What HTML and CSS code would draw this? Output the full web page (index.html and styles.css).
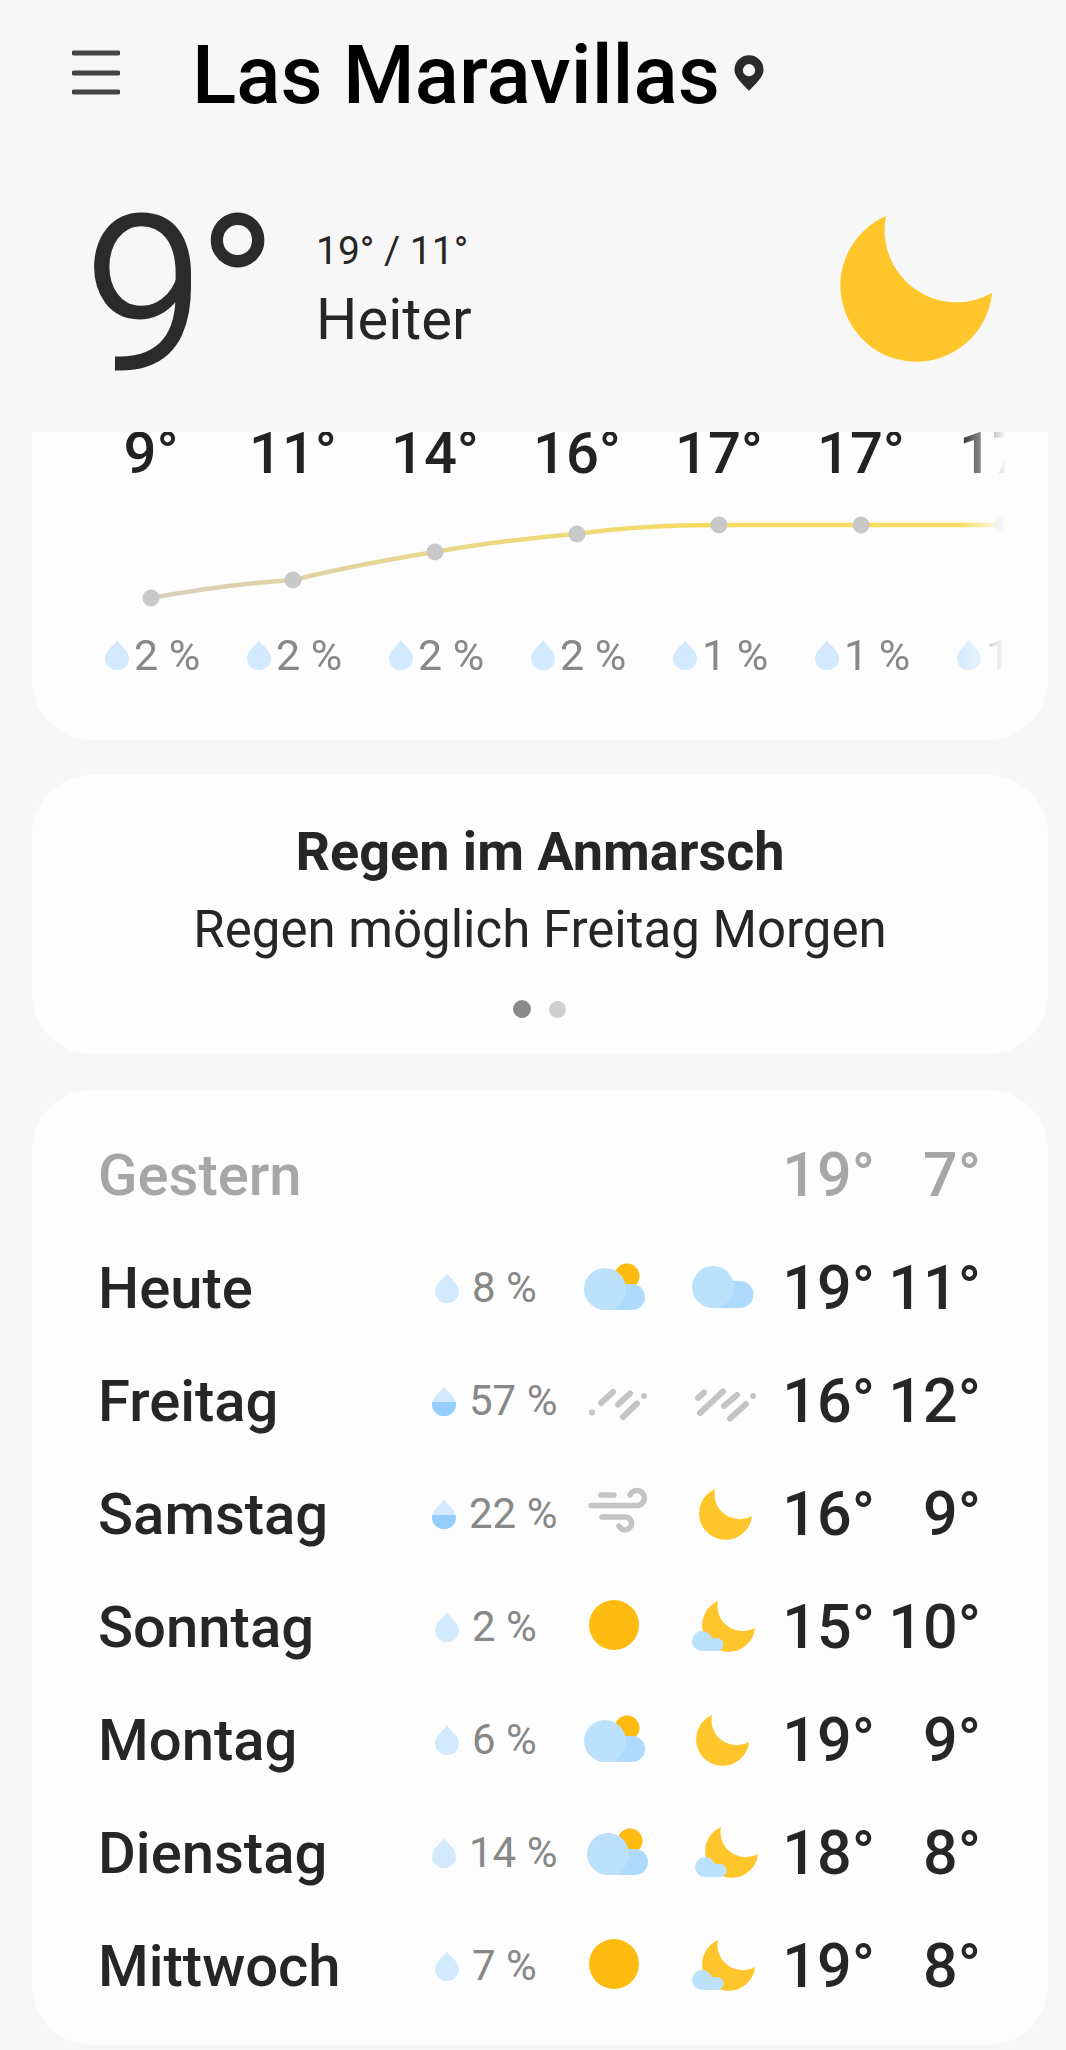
FILE: index.html
```html
<!DOCTYPE html>
<html lang="de">
<head>
<meta charset="utf-8">
<title>Wetter</title>
<link rel="stylesheet" href="styles.css">
</head>
<body>
<svg class="defs" aria-hidden="true">
  <defs>
    <clipPath id="dropfill"><rect x="0" y="16" width="24" height="16"/></clipPath>
    <symbol id="moon" viewBox="0 0 152 146" overflow="visible"><path fill="#ffc62b" d="M46 0A76 76 0 1 0 152 77A72 72 0 0 1 46 0Z"/></symbol>
    <symbol id="drop" viewBox="0 0 24 30"><path fill="#d3eafe" d="M12 0C14 5 24 10 24 18.500A12 11.500 0 0 1 0 18.500C0 10 10 5 12 0Z"/></symbol>
    <symbol id="dropfull" viewBox="0 0 24 30"><path fill="#d3eafe" d="M12 0C14 5 24 10 24 18.500A12 11.500 0 0 1 0 18.500C0 10 10 5 12 0Z"/><path clip-path="url(#dropfill)" fill="#95cdff" d="M12 0C14 5 24 10 24 18.500A12 11.500 0 0 1 0 18.500C0 10 10 5 12 0Z"/></symbol>
    <symbol id="cloudsun" viewBox="0 0 64 50" overflow="visible">
      <circle cx="45" cy="13" r="12.500" fill="#ffbb0f"/>
      <path fill="#aedbfd" d="M23 21H50A13 13 0 0 1 50 47H23Z"/>
      <circle cx="23" cy="26" r="21" fill="#bbe1fd"/>
      <path fill="#bbe1fd" d="M23 47H34V40H23Z"/>
    </symbol>
    <symbol id="cloud" viewBox="0 0 64 50" overflow="visible">
      <path fill="#aedbfd" d="M22 18H49A13.500 13.500 0 0 1 49 45H22Z"/>
      <circle cx="22" cy="24" r="21" fill="#bbe1fd"/>
    </symbol>
    <symbol id="sun" viewBox="0 0 64 50" overflow="visible"><circle cx="32" cy="23" r="25" fill="#ffbb0f"/></symbol>
    <symbol id="moonsmall" viewBox="0 0 64 50" overflow="visible"><use href="#moon" x="8" y="0" width="53" height="51"/></symbol>
    <symbol id="moonleft" viewBox="0 0 64 50" overflow="visible"><use href="#moon" x="5" y="0" width="53" height="51"/></symbol>
    <symbol id="mooncloud" viewBox="0 0 64 50" overflow="visible">
      <use href="#moon" x="11" y="-1" width="53" height="51"/>
      <path fill="#bbe1fd" d="M11 29A10 10 0 0 1 21 37A7 7 0 0 1 24 49H11A10 10 0 0 1 11 29Z"/>
      <path fill="#bbe1fd" d="M14 36H26A6.500 6.500 0 0 1 26 49H14Z"/>
    </symbol>
    <symbol id="raina" viewBox="0 0 64 50" overflow="visible">
      <g fill="none" stroke="#c4c4c4" stroke-width="6" stroke-linecap="round">
        <path d="M10 36.500V36.500M19 27L31 16M36 28.500L48 17.500M41 41L55 27.500M62 20V20"/>
      </g>
    </symbol>
    <symbol id="rainb" viewBox="0 0 64 50" overflow="visible">
      <g fill="none" stroke="#c4c4c4" stroke-width="6" stroke-linecap="round">
        <path d="M7 22L13 16.500M9 37L32 15.500M33 30L46 19M39 42.500L55 28M62 20V20"/>
      </g>
    </symbol>
    <symbol id="wind" viewBox="0 0 64 50" overflow="visible">
      <g fill="none" stroke="#c4c4c4" stroke-width="5.500" stroke-linecap="round">
        <path d="M19 6H32M9 16.500H56A7.500 7.500 0 1 0 48 6M20 28H44A6.500 6.500 0 1 1 37 37"/>
      </g>
    </symbol>
  </defs>
</svg>

<header class="topbar">
  <svg class="menu" viewBox="0 0 48 46"><path d="M2 3H46M2 23H46M2 42H46" fill="none" stroke="#444" stroke-width="5" stroke-linecap="round"/></svg>
  <h1 class="place">Las Maravillas</h1>
  <svg class="pin" viewBox="0 0 32 38"><path fill-rule="evenodd" fill="#2b2b2b" d="M16 0A15.500 15.500 0 0 1 31.500 15.500C31.500 24 22 31 16 38C10 31 .5 24 .5 15.500A15.500 15.500 0 0 1 16 0ZM16 9.500A6.500 6.500 0 1 0 16 22.500A6.500 6.500 0 1 0 16 9.500Z"/></svg>
</header>

<section class="hero">
  <div class="now">9°</div>
  <div class="now-detail">
    <div class="range">19° / 11°</div>
    <div class="cond">Heiter</div>
  </div>
  <svg class="hero-moon"><use href="#moon" width="152" height="146"/></svg>
</section>

<section class="card hourly">
  <div class="scroller">
    <div class="hour-temps">
      <span>9°</span><span>11°</span><span>14°</span><span>16°</span><span>17°</span><span>17°</span><span>17°</span>
    </div>
    <svg class="curve" viewBox="0 0 924 105" width="924" height="105">
      <defs>
        <linearGradient id="linegrad" gradientUnits="userSpaceOnUse" x1="71" x2="640" y1="0" y2="0">
          <stop offset="0" stop-color="#d8d0bd"/>
          <stop offset="1" stop-color="#f8dc5e"/>
        </linearGradient>
      </defs>
      <path fill="none" stroke="url(#linegrad)" stroke-width="4.500" d="M71 88C120 79 165 73 213 70C262 58 305 50 355 42C405 33 450 28 497 24C545 17 590 15 639 15H924"/>
      <g fill="#c8c8c8">
        <circle cx="71" cy="88" r="8.500"/><circle cx="213" cy="70" r="8.500"/><circle cx="355" cy="42" r="8.500"/><circle cx="497" cy="24" r="8.500"/><circle cx="639" cy="15" r="8.500"/><circle cx="781" cy="15" r="8.500"/><circle cx="923" cy="15" r="8.500"/>
      </g>
    </svg>
    <div class="hour-rain">
      <span class="hr"><svg class="hr-drop"><use href="#drop" width="24" height="30"/></svg>2 %</span>
      <span class="hr"><svg class="hr-drop"><use href="#drop" width="24" height="30"/></svg>2 %</span>
      <span class="hr"><svg class="hr-drop"><use href="#drop" width="24" height="30"/></svg>2 %</span>
      <span class="hr"><svg class="hr-drop"><use href="#drop" width="24" height="30"/></svg>2 %</span>
      <span class="hr"><svg class="hr-drop"><use href="#drop" width="24" height="30"/></svg>1 %</span>
      <span class="hr"><svg class="hr-drop"><use href="#drop" width="24" height="30"/></svg>1 %</span>
      <span class="hr"><svg class="hr-drop"><use href="#drop" width="24" height="30"/></svg>1 %</span>
    </div>
  </div>
</section>

<section class="card notice">
  <h2 class="notice-title">Regen im Anmarsch</h2>
  <p class="notice-text">Regen möglich Freitag Morgen</p>
  <div class="dots"><span class="dot active"></span><span class="dot"></span></div>
</section>

<section class="card days">
  <div class="row past">
    <div class="day">Gestern</div>
    <div class="hi past-hi">19°</div><div class="lo">7°</div>
  </div>
  <div class="row">
    <div class="day">Heute</div>
    <div class="pct"><svg class="drop"><use href="#drop" width="24" height="30"/></svg>8 %</div>
    <svg class="ic"><use href="#cloudsun" width="64" height="50"/></svg>
    <svg class="ic ic2"><use href="#cloud" width="64" height="50"/></svg>
    <div class="hi">19°</div><div class="lo">11°</div>
  </div>
  <div class="row">
    <div class="day">Freitag</div>
    <div class="pct wide"><svg class="drop"><use href="#dropfull" width="24" height="30"/></svg>57 %</div>
    <svg class="ic"><use href="#raina" width="64" height="50"/></svg>
    <svg class="ic ic2"><use href="#rainb" width="64" height="50"/></svg>
    <div class="hi">16°</div><div class="lo">12°</div>
  </div>
  <div class="row">
    <div class="day">Samstag</div>
    <div class="pct wide"><svg class="drop"><use href="#dropfull" width="24" height="30"/></svg>22 %</div>
    <svg class="ic"><use href="#wind" width="64" height="50"/></svg>
    <svg class="ic ic2"><use href="#moonsmall" width="64" height="50"/></svg>
    <div class="hi">16°</div><div class="lo">9°</div>
  </div>
  <div class="row">
    <div class="day">Sonntag</div>
    <div class="pct"><svg class="drop"><use href="#drop" width="24" height="30"/></svg>2 %</div>
    <svg class="ic"><use href="#sun" width="64" height="50"/></svg>
    <svg class="ic ic2"><use href="#mooncloud" width="64" height="50"/></svg>
    <div class="hi">15°</div><div class="lo">10°</div>
  </div>
  <div class="row">
    <div class="day">Montag</div>
    <div class="pct"><svg class="drop"><use href="#drop" width="24" height="30"/></svg>6 %</div>
    <svg class="ic"><use href="#cloudsun" width="64" height="50"/></svg>
    <svg class="ic ic2"><use href="#moonleft" width="64" height="50"/></svg>
    <div class="hi">19°</div><div class="lo">9°</div>
  </div>
  <div class="row">
    <div class="day">Dienstag</div>
    <div class="pct wide"><svg class="drop"><use href="#drop" width="24" height="30"/></svg>14 %</div>
    <svg class="ic nudge"><use href="#cloudsun" width="64" height="50"/></svg>
    <svg class="ic ic2 nudge"><use href="#mooncloud" width="64" height="50"/></svg>
    <div class="hi">18°</div><div class="lo">8°</div>
  </div>
  <div class="row">
    <div class="day">Mittwoch</div>
    <div class="pct"><svg class="drop"><use href="#drop" width="24" height="30"/></svg>7 %</div>
    <svg class="ic"><use href="#sun" width="64" height="50"/></svg>
    <svg class="ic ic2"><use href="#mooncloud" width="64" height="50"/></svg>
    <div class="hi">19°</div><div class="lo">8°</div>
  </div>
</section>
</body>
</html>
```

FILE: styles.css
```css
html, body {
  margin: 0;
  padding: 0;
  background: #f7f7f7;
  height: 2050px;
  overflow: hidden;
  font-family: Roboto, "Liberation Sans", sans-serif;
  color: #262626;
}

.defs { width: 0; height: 0; display: block; }

.topbar {
  display: flex;
  align-items: center;
  height: 148px;
  padding-left: 72px;
}
.menu { width: 48px; height: 46px; margin-top: -3px; }
.place {
  margin: 2px 0 0 72px;
  font-size: 82px;
  font-weight: 500;
  color: #000;
  line-height: 1;
}
.pin { width: 30px; height: 38px; margin: -2px 0 0 14px; }

.hero {
  display: flex;
  height: 284px;
  padding: 0 74px 0 85px;
}
.now {
  font-size: 213px;
  font-weight: 300;
  -webkit-text-stroke: 3px #2b2b2b;
  line-height: 1;
  letter-spacing: -6px;
  width: 231px;
  margin-top: 41px;
  color: #2b2b2b;
}
.now-detail { flex: 1; padding-top: 80px; }
.range { font-size: 39px; line-height: 46px; }
.cond { font-size: 58px; line-height: 68px; margin-top: 11px; }
.hero-moon { width: 152px; height: 146px; margin-top: 68px; }

.card {
  background: #fdfdfd;
  margin: 0 18px 35px 32px;
  border-radius: 60px;
  overflow: hidden;
}

.hourly {
  height: 308px;
  border-radius: 0 0 60px 60px;
  padding: 0 42px 0 48px;
}
.scroller {
  overflow: hidden;
  height: 100%;
  -webkit-mask-image: linear-gradient(to left, transparent 0, #000 48px);
  mask-image: linear-gradient(to left, transparent 0, #000 48px);
}
.hour-temps {
  display: flex;
  width: 994px;
  height: 78px;
  overflow: hidden;
  font-size: 58px;
  font-weight: 500;
  color: #222;
  line-height: 68px;
}
.hour-temps span { flex: 0 0 142px; text-align: center; margin-top: -13px; }
.curve { display: block; }
.hour-rain {
  display: flex;
  width: 994px;
  font-size: 43px;
  color: #888;
  line-height: 80px;
}
.hr { flex: 0 0 142px; display: flex; align-items: center; padding-left: 25px; box-sizing: border-box; }
.hr-drop { width: 24px; height: 30px; margin-right: 5px; flex: none; }

.notice {
  height: 279px;
  margin-bottom: 36px;
  text-align: center;
  padding-top: 38px;
  box-sizing: border-box;
}
.notice-title { margin: 0; font-size: 54px; font-weight: 700; line-height: 78px; }
.notice-text { margin: 0; font-size: 51px; line-height: 78px; }
.dots { display: flex; justify-content: center; align-items: center; gap: 18px; margin: 31px 2px 0 0; height: 18px; }
.dot { width: 17px; height: 17px; border-radius: 50%; background: #cfcfcf; }
.dot.active { width: 18px; height: 18px; background: #8a8a8a; }

.days { padding: 28px 67px 23px 66px; margin-bottom: 0; }
.row {
  display: grid;
  grid-template-columns: 334px 150px 66px 108px 119px 106px;
  align-items: center;
  height: 113px;
}
.day { font-size: 58px; font-weight: 500; }
.past .day { color: #a6a6a6; }
.past .hi, .past .lo { color: #a6a6a6; }
.past-hi { grid-column: 5; }
.pct {
  display: flex;
  align-items: center;
  font-size: 42px;
  color: #888;
  margin-left: 3px;
}
.pct.wide { margin-left: 0; }
.drop { width: 24px; height: 30px; margin-right: 13px; flex: none; }
.ic { width: 64px; height: 50px; overflow: visible; }
.ic2 { margin-left: 43px; }
.nudge { transform: translateX(3px); }
.hi, .lo { font-size: 61px; font-weight: 500; text-align: right; }
```
